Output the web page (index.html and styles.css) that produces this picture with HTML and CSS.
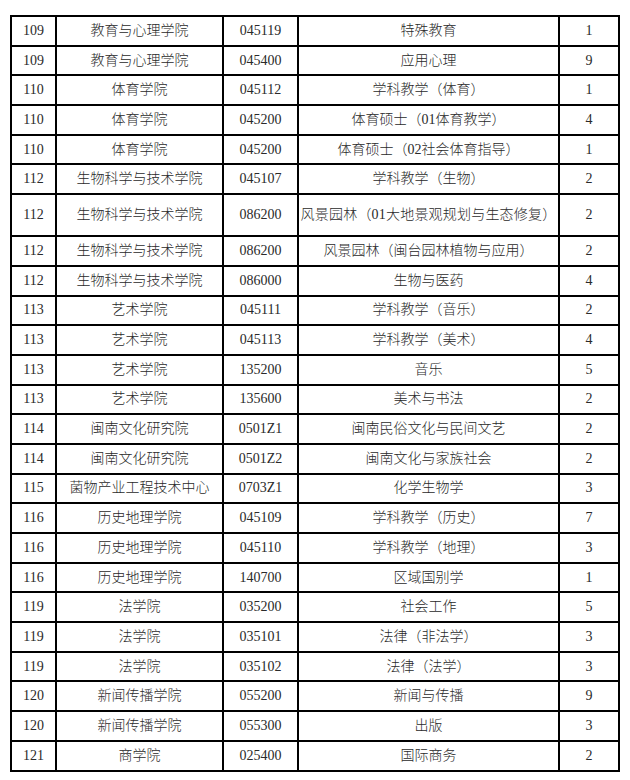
FILE: index.html
```html
<!DOCTYPE html>
<html lang="zh-CN">
<head>
<meta charset="utf-8">
<title>招生专业表</title>
<link rel="stylesheet" href="styles.css">
</head>
<body>
<table class="grid">
<colgroup>
<col class="c-id"><col class="c-school"><col class="c-code"><col class="c-major"><col class="c-num">
</colgroup>
<tbody>
<tr><td>109</td><td>教育与心理学院</td><td>045119</td><td>特殊教育</td><td>1</td></tr>
<tr><td>109</td><td>教育与心理学院</td><td>045400</td><td>应用心理</td><td>9</td></tr>
<tr><td>110</td><td>体育学院</td><td>045112</td><td>学科教学（体育）</td><td>1</td></tr>
<tr><td>110</td><td>体育学院</td><td>045200</td><td>体育硕士（01体育教学）</td><td>4</td></tr>
<tr><td>110</td><td>体育学院</td><td>045200</td><td>体育硕士（02社会体育指导）</td><td>1</td></tr>
<tr><td>112</td><td>生物科学与技术学院</td><td>045107</td><td>学科教学（生物）</td><td>2</td></tr>
<tr class="tall"><td>112</td><td>生物科学与技术学院</td><td>086200</td><td class="tight">风景园林（01大地景观规划与生态修复）</td><td>2</td></tr>
<tr><td>112</td><td>生物科学与技术学院</td><td>086200</td><td>风景园林（闽台园林植物与应用）</td><td>2</td></tr>
<tr><td>112</td><td>生物科学与技术学院</td><td>086000</td><td>生物与医药</td><td>4</td></tr>
<tr><td>113</td><td>艺术学院</td><td>045111</td><td>学科教学（音乐）</td><td>2</td></tr>
<tr><td>113</td><td>艺术学院</td><td>045113</td><td>学科教学（美术）</td><td>4</td></tr>
<tr><td>113</td><td>艺术学院</td><td>135200</td><td>音乐</td><td>5</td></tr>
<tr><td>113</td><td>艺术学院</td><td>135600</td><td>美术与书法</td><td>2</td></tr>
<tr><td>114</td><td>闽南文化研究院</td><td>0501Z1</td><td>闽南民俗文化与民间文艺</td><td>2</td></tr>
<tr><td>114</td><td>闽南文化研究院</td><td>0501Z2</td><td>闽南文化与家族社会</td><td>2</td></tr>
<tr><td>115</td><td>菌物产业工程技术中心</td><td>0703Z1</td><td>化学生物学</td><td>3</td></tr>
<tr><td>116</td><td>历史地理学院</td><td>045109</td><td>学科教学（历史）</td><td>7</td></tr>
<tr><td>116</td><td>历史地理学院</td><td>045110</td><td>学科教学（地理）</td><td>3</td></tr>
<tr><td>116</td><td>历史地理学院</td><td>140700</td><td>区域国别学</td><td>1</td></tr>
<tr><td>119</td><td>法学院</td><td>035200</td><td>社会工作</td><td>5</td></tr>
<tr><td>119</td><td>法学院</td><td>035101</td><td>法律（非法学）</td><td>3</td></tr>
<tr><td>119</td><td>法学院</td><td>035102</td><td>法律（法学）</td><td>3</td></tr>
<tr><td>120</td><td>新闻传播学院</td><td>055200</td><td>新闻与传播</td><td>9</td></tr>
<tr><td>120</td><td>新闻传播学院</td><td>055300</td><td>出版</td><td>3</td></tr>
<tr><td>121</td><td>商学院</td><td>025400</td><td>国际商务</td><td>2</td></tr>
</tbody>
</table>
</body>
</html>
```
FILE: styles.css
```css
html, body {
  margin: 0;
  padding: 0;
  background: #fff;
}
body {
  padding: 15px 0 0 10px;
}
.grid {
  border-collapse: collapse;
  table-layout: fixed;
  width: 608px;
  font-family: "Liberation Serif", "Noto Sans CJK SC", serif;
  font-size: 14px;
  color: #2a2a2a;
}
.c-id { width: 45px; }
.c-school { width: 167px; }
.c-code { width: 75px; }
.c-major { width: 261px; }
.c-num { width: 60px; }
.grid td {
  border: 2px solid #000;
  height: 27.7px;
  padding: 0 2px;
  text-align: center;
  vertical-align: middle;
  white-space: nowrap;
  line-height: 16px;
  font-weight: 300;
}
.grid tr.tall td {
  height: 40px;
}
.grid td.tight {
  padding: 0;
  letter-spacing: 0.2px;
}
```
